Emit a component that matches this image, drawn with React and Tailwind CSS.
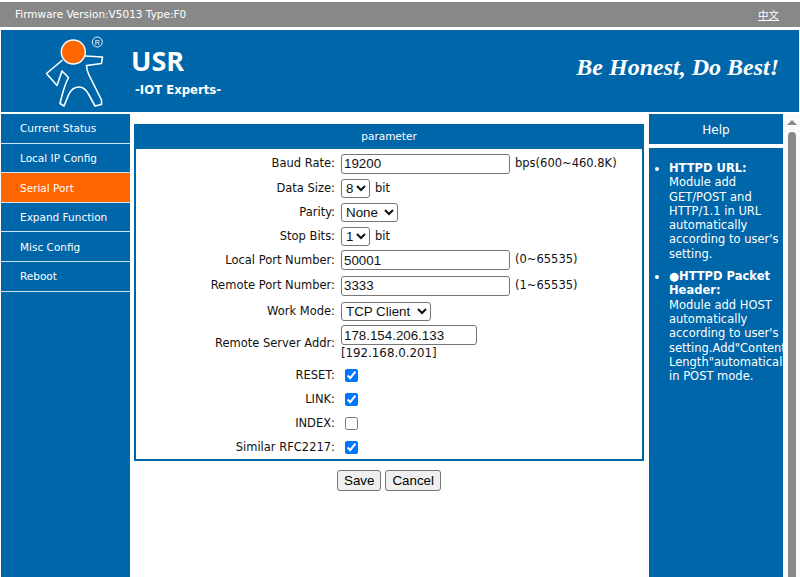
const menu = ['Current Status', 'Local IP Config', 'Serial Port', 'Expand Function', 'Misc Config', 'Reboot'];

const Logo = () => (
  <svg width="70" height="76" viewBox="0 0 70 76" className="ml-[39px] mt-[2px] shrink-0" fill="none">
    <path
      d="M22.5 28 L6.5 41.5 L17 53.5 L22 39 L28.5 45.5 Q24 54 20 71.5 L24 74 L28.5 63 Q32 55 39 55 Q45 55 49 63 L55 74 L61.5 72.5 L61.5 68 L49 43 Q46.5 38 46.5 33.5 L61.5 31.5 L62.5 25 L45 24"
      stroke="#fff"
      strokeWidth="1.6"
      strokeLinejoin="round"
    />
    <circle cx="33.3" cy="20" r="12" fill="#ff6600" stroke="#fff" strokeWidth="1.4" />
    <circle cx="57.3" cy="10" r="5" stroke="#fff" strokeWidth="0.9" />
    <text x="57.3" y="12.5" textAnchor="middle" fill="#fff" fontSize="7" fontFamily="Liberation Sans, sans-serif">R</text>
  </svg>
);

const Row = ({ label, h = 'h-[24px]', children }) => (
  <div className={`flex items-center ${h}`}>
    <div className="w-[199px] pt-[1px] text-right shrink-0">{label}</div>
    <div className="ml-[6px] flex items-center gap-[5px]">{children}</div>
  </div>
);

const TextBox = ({ value, w = 'w-[169px]' }) => (
  <input
    readOnly
    value={value}
    className={`${w} h-[20px] border border-[#767676] rounded-[3px] bg-white px-[2px] text-[13.33px] [font-family:'Liberation_Sans',sans-serif]`}
  />
);

const Drop = ({ value, options, w }) => (
  <select
    value={value}
    onChange={() => {}}
    className={`${w} h-[19px] border border-[#767676] rounded-[3px] bg-white text-[13.33px] [font-family:'Liberation_Sans',sans-serif]`}
  >
    {options.map((o) => (
      <option key={o}>{o}</option>
    ))}
  </select>
);

const Check = ({ checked }) => (
  <input type="checkbox" checked={checked} onChange={() => {}} className="w-[13px] h-[13px] ml-[4px]" />
);

const Btn = ({ children }) => (
  <button className="h-[21px] px-[6px] border border-[#767676] rounded-[3px] bg-[#efefef] text-[13.33px] text-black [font-family:'Liberation_Sans',sans-serif]">
    {children}
  </button>
);

export default function App() {
  return (
    <div className="w-[800px] h-[577px] overflow-hidden bg-white pt-[2px] text-[11.5px] [font-family:'DejaVu_Sans',sans-serif]">
      <div className="h-[25px] bg-[#888888] flex items-center justify-between pl-[15px] pr-[21px] text-[10.5px] text-white">
        <span>Firmware Version:V5013 Type:F0</span>
        <a className="underline text-[10.5px] [font-family:'Noto_Sans_CJK_SC',sans-serif]">中文</a>
      </div>
      <div className="mt-[3px] h-[82px] mx-[1px] bg-[#0066aa] flex text-white">
        <Logo />
        <div className="ml-[21px] shrink-0">
          <div className="mt-[14px] text-[27px] leading-[34px] font-bold [font-family:'Open_Sans',sans-serif]">USR</div>
          <div className="mt-[4px] ml-[4px] text-[11.7px] font-bold">-IOT Experts-</div>
        </div>
        <div className="ml-auto mr-[20px] mt-[19px] text-[24px] font-bold italic [font-family:'Liberation_Serif',serif]">
          Be Honest, Do Best!
        </div>
      </div>
      <div className="flex h-[465px] mt-[2px]">
        <div className="w-[129px] ml-[1px] shrink-0 bg-[#0066aa] h-full">
          {menu.map((m) => (
            <div
              key={m}
              className={`h-[29.6px] flex items-center pl-[19px] pt-[2px] border-b border-[#cfe3f0] text-[10.5px] text-white ${m === 'Serial Port' ? 'bg-[#ff6600]' : ''}`}
            >
              {m}
            </div>
          ))}
        </div>
        <div className="w-[510px] ml-[4px] mt-[10px] shrink-0">
          <div className="border-2 border-[#0066aa]">
            <div className="h-[24px] -mt-[1px] bg-[#0066aa] text-white text-[10.5px] flex items-center justify-center">parameter</div>
            <div className="pt-[2px] text-[#111]">
              <Row label="Baud Rate:" h="h-[25px]">
                <TextBox value="19200" />
                <span>bps(600~460.8K)</span>
              </Row>
              <Row label="Data Size:">
                <Drop value="8" options={['8', '7']} w="w-[29px]" />
                <span className="pt-[1px]">bit</span>
              </Row>
              <Row label="Parity:">
                <Drop value="None" options={['None', 'Odd', 'Even']} w="w-[57px]" />
              </Row>
              <Row label="Stop Bits:">
                <Drop value="1" options={['1', '2']} w="w-[29px]" />
                <span className="pt-[1px]">bit</span>
              </Row>
              <Row label="Local Port Number:">
                <TextBox value="50001" />
                <span>(0~65535)</span>
              </Row>
              <Row label="Remote Port Number:" h="h-[27px]">
                <TextBox value="3333" />
                <span>(1~65535)</span>
              </Row>
              <Row label="Work Mode:">
                <Drop value="TCP Client" options={['TCP Client', 'TCP Server', 'UDP']} w="w-[90px]" />
              </Row>
              <Row label="Remote Server Addr:" h="h-[40px]">
                <div className="flex flex-col">
                  <TextBox value="178.154.206.133" w="w-[136px]" />
                  <span className="text-[11.8px] leading-[15px] pt-[1px]">[192.168.0.201]</span>
                </div>
              </Row>
              <Row label="RESET:"><Check checked /></Row>
              <Row label="LINK:"><Check checked /></Row>
              <Row label="INDEX:"><Check checked={false} /></Row>
              <Row label="Similar RFC2217:"><Check checked /></Row>
            </div>
          </div>
          <div className="flex justify-center gap-[4px] mt-[9px]">
            <Btn>Save</Btn>
            <Btn>Cancel</Btn>
          </div>
        </div>
        <div className="w-[134px] ml-[5px] shrink-0 flex flex-col gap-[4px] text-white">
          <div className="h-[30px] pt-[1px] bg-[#0066aa] text-[12px] flex items-center justify-center">Help</div>
          <div className="flex-1 bg-[#0066aa] overflow-hidden pt-[13px]">
            <ul className="list-disc pl-[20px] w-[200px] leading-[14.3px]">
              <li className="w-[114px] mb-[8px]">
                <b>HTTPD URL:</b>
                <br />
                Module add GET/POST and HTTP/1.1 in URL automatically according to user's setting.
              </li>
              <li>
                <div className="w-[114px]">
                  <b>●HTTPD Packet Header:</b>
                  <br />
                  Module add HOST automatically according to user's
                </div>
                <div>setting.Add"Content</div>
                <div>Length"automaticall</div>
                <div>in POST mode.</div>
              </li>
            </ul>
          </div>
        </div>
        <div className="w-[16px] ml-[1px] shrink-0 flex flex-col items-center pt-[6px] bg-[#fafafa]">
          <div className="w-0 h-0 border-x-[5px] border-x-transparent border-b-[5px] border-b-[#888]" />
          <div className="w-[8px] flex-1 mt-[7px] rounded-t-[4px] bg-[#888888]" />
        </div>
      </div>
    </div>
  );
}
